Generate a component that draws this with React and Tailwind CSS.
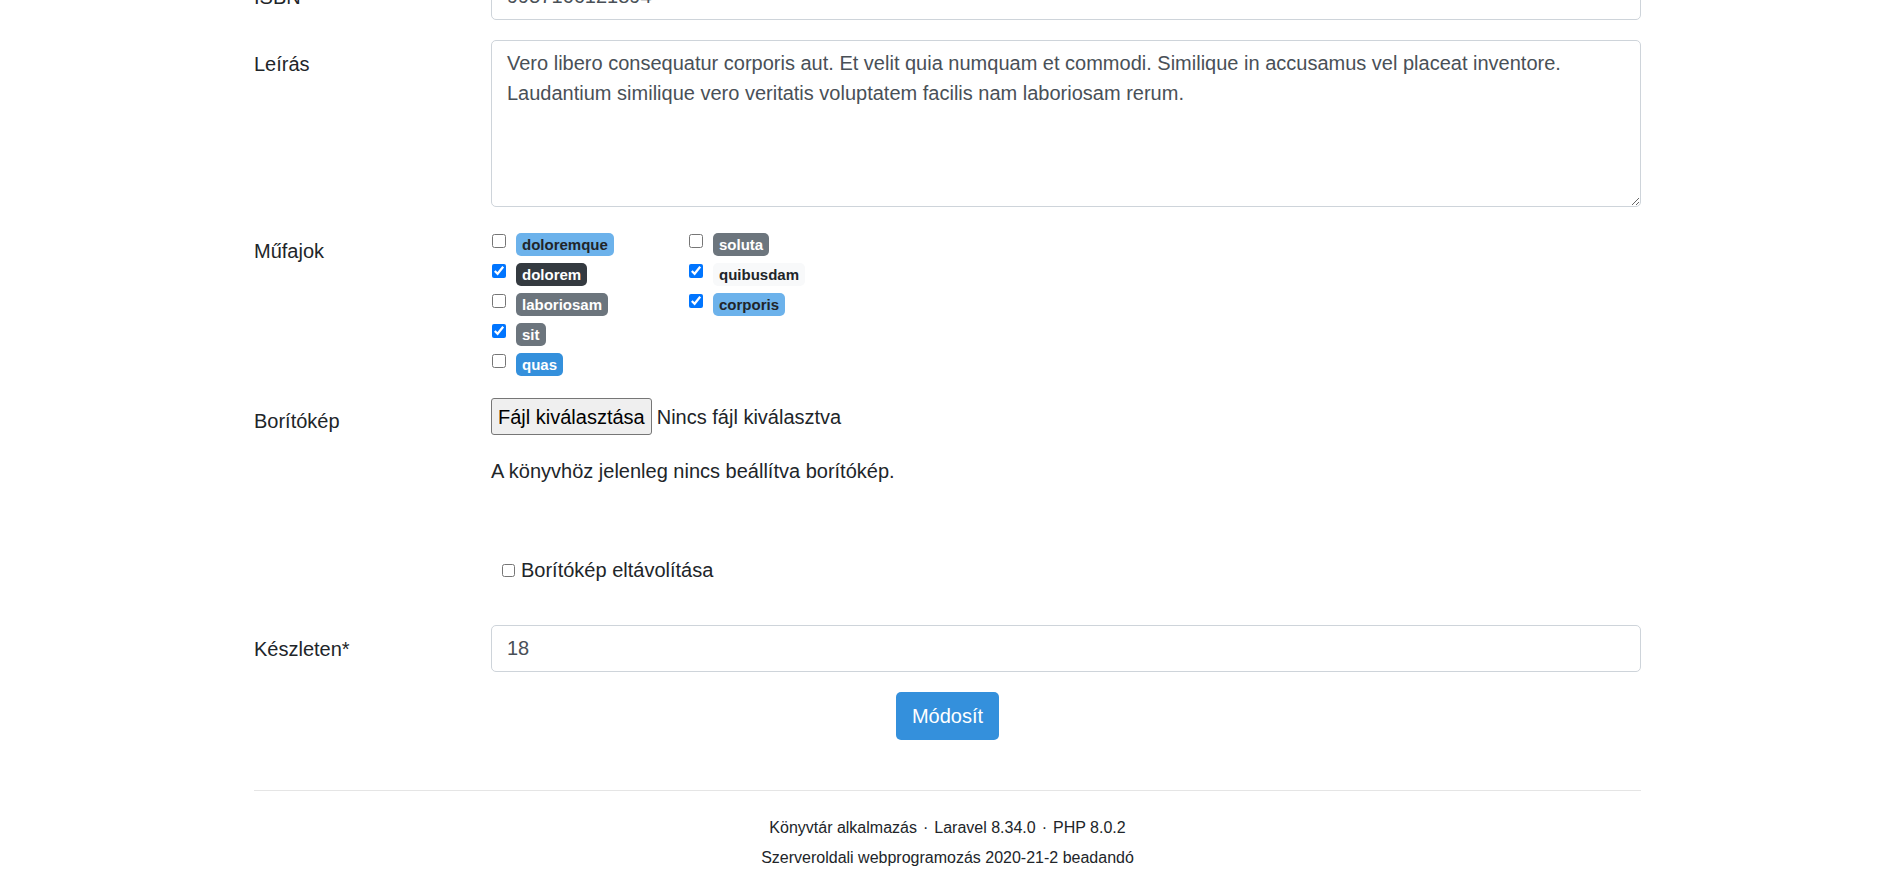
import React from "react";

const font = { fontFamily: '"Liberation Sans", Arial, sans-serif' };

const genresLeft = [
  { name: "doloremque", checked: false, cls: "bg-[#6cb2eb] text-[#212529]" },
  { name: "dolorem", checked: true, cls: "bg-[#343a40] text-white" },
  { name: "laboriosam", checked: false, cls: "bg-[#6c757d] text-white" },
  { name: "sit", checked: true, cls: "bg-[#6c757d] text-white" },
  { name: "quas", checked: false, cls: "bg-[#3490dc] text-white" },
];

const genresRight = [
  { name: "soluta", checked: false, cls: "bg-[#6c757d] text-white" },
  { name: "quibusdam", checked: true, cls: "bg-[#f8f9fa] text-[#212529]" },
  { name: "corporis", checked: true, cls: "bg-[#6cb2eb] text-[#212529]" },
];

const GenreRow = ({ genre }) => (
  <div className="flex items-start h-[30px]">
    <input
      type="checkbox"
      defaultChecked={genre.checked}
      className="mt-[7px] w-[14px] h-[14px] accent-[#0075ff]"
    />
    <span
      className={`ml-[10px] mt-[6px] px-[6px] py-[4px] rounded-[5px] text-[15px] font-bold leading-none ${genre.cls}`}
    >
      {genre.name}
    </span>
  </div>
);

const Label = ({ children }) => (
  <div className="w-[237px] shrink-0 pt-[9px] text-[20px] leading-[30px] text-[#212529]">
    {children}
  </div>
);

export default function App() {
  return (
    <div className="min-h-screen bg-white text-[#212529]" style={font}>
      <div className="w-[1387px] mx-auto -mt-[27px]">
        {/* ISBN */}
        <div className="flex mb-[20px]">
          <Label>ISBN</Label>
          <input
            readOnly
            value="9957166121894"
            className="flex-1 h-[47px] border border-[#ced4da] rounded-[5px] px-[15px] text-[20px] leading-[30px] text-[#495057] bg-white"
          />
        </div>

        {/* Leírás */}
        <div className="flex mb-[20px]">
          <Label>Leírás</Label>
          <textarea
            readOnly
            value={
              "Vero libero consequatur corporis aut. Et velit quia numquam et commodi. Similique in accusamus vel placeat inventore.\nLaudantium similique vero veritatis voluptatem facilis nam laboriosam rerum."
            }
            className="flex-1 h-[167px] border border-[#ced4da] rounded-[5px] px-[15px] py-[7px] text-[20px] leading-[30px] text-[#495057] bg-white"
          />
        </div>

        {/* Műfajok */}
        <div className="flex mb-[20px]">
          <Label>Műfajok</Label>
          <div className="flex flex-1 pl-[1px]">
            <div className="w-[197px]">
              {genresLeft.map((g) => (
                <GenreRow key={g.name} genre={g} />
              ))}
            </div>
            <div>
              {genresRight.map((g) => (
                <GenreRow key={g.name} genre={g} />
              ))}
            </div>
          </div>
        </div>

        {/* Borítókép */}
        <div className="flex mb-[40px]">
          <Label>Borítókép</Label>
          <div className="flex-1 text-[20px] leading-[30px]">
            <div className="flex items-center h-[39px]">
              <span className="h-[37px] flex items-center px-[6px] border border-[#767676] bg-[#efefef] rounded-[3px] text-[#000]">
                Fájl kiválasztása
              </span>
              <span className="ml-[5px]">Nincs fájl kiválasztva</span>
            </div>
            <p className="mt-[20px]">A könyvhöz jelenleg nincs beállítva borítókép.</p>
            <div className="mt-[69px] flex items-center pl-[11px]">
              <input type="checkbox" className="w-[13px] h-[13px]" />
              <span className="ml-[6px]">Borítókép eltávolítása</span>
            </div>
          </div>
        </div>

        {/* Készleten */}
        <div className="flex mb-[20px]">
          <Label>Készleten*</Label>
          <input
            readOnly
            value="18"
            className="flex-1 h-[47px] border border-[#ced4da] rounded-[5px] px-[15px] text-[20px] leading-[30px] text-[#495057] bg-white"
          />
        </div>

        <div className="flex justify-center">
          <button className="h-[48px] px-[16px] bg-[#3490dc] text-white text-[20px] leading-[30px] rounded-[5px]">
            Módosít
          </button>
        </div>

        <footer className="mt-[50px] border-t border-[#e5e5e5] pt-[22px] pb-[20px] text-center text-[16px] leading-[30px] text-[#212529]">
          <div>
            Könyvtár alkalmazás
            <span className="mx-[6px]">·</span>
            Laravel 8.34.0
            <span className="mx-[6px]">·</span>
            PHP 8.0.2
          </div>
          <div>Szerveroldali webprogramozás 2020-21-2 beadandó</div>
        </footer>
      </div>
    </div>
  );
}
